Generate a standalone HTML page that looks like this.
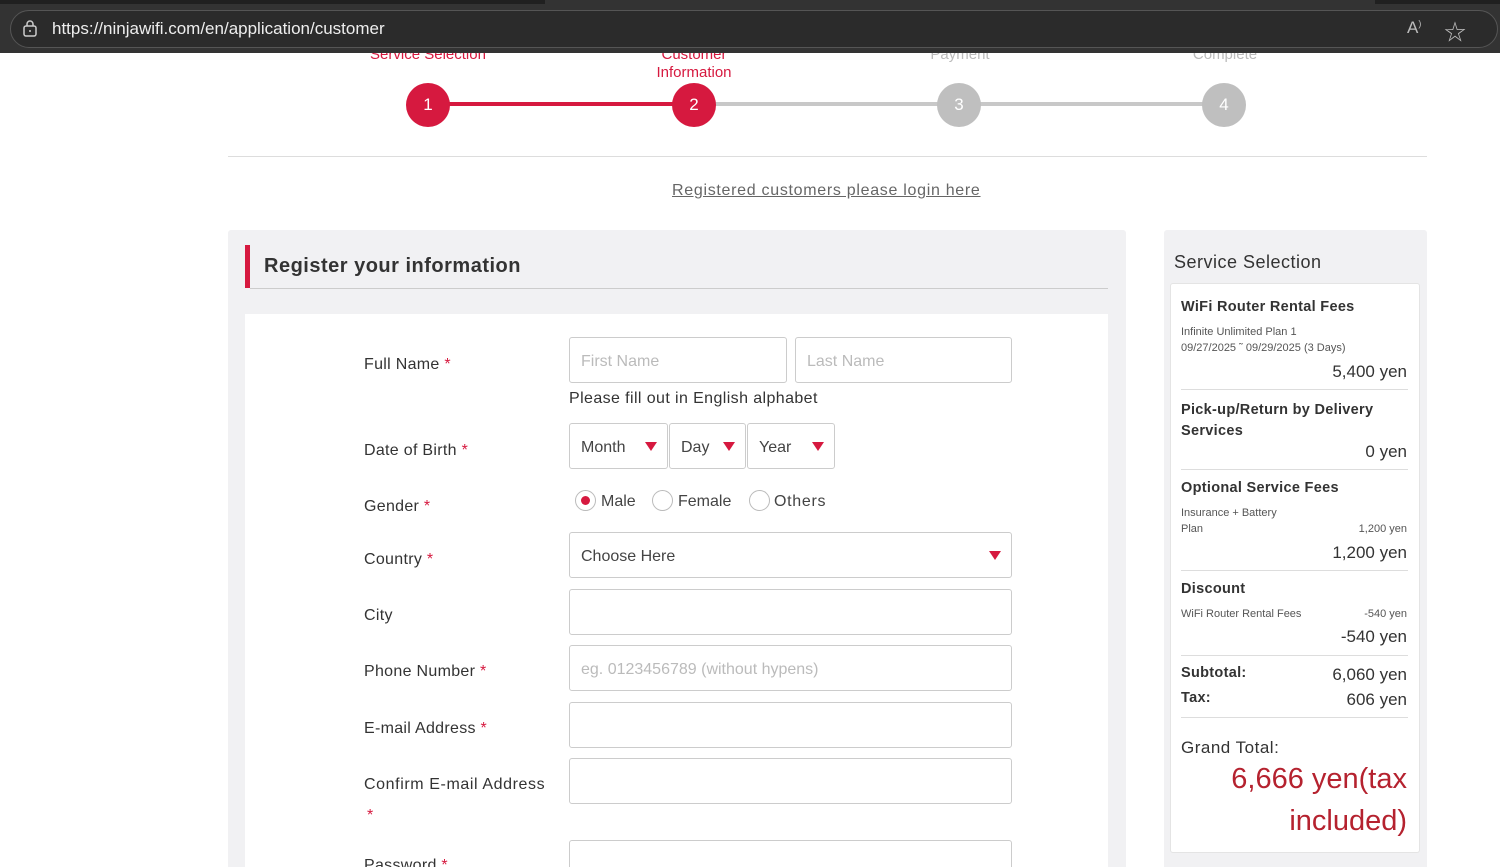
<!DOCTYPE html>
<html style="overflow:hidden;height:867px"><head><meta charset="utf-8"><style>
*{box-sizing:border-box;margin:0;padding:0}
body{width:1500px;height:867px;overflow:hidden;background:#fff;font-family:"Liberation Sans","Noto Sans CJK JP",sans-serif;color:#333;position:relative}
.a{position:absolute}
.lbl{position:absolute;left:364px;font-size:16px;color:#333;letter-spacing:.3px}
.lbl i{color:#d6193f;font-style:normal}
.inp{position:absolute;left:569px;width:443px;height:46px;border:1px solid #ccc;border-radius:3px;background:#fff;font-size:16px;color:#bbb;padding:15px 11px 0}
.sel{position:absolute;top:423px;height:46px;border:1px solid #ccc;border-radius:3px;background:#fff;font-size:16px;color:#444;padding:15px 11px 0}
.tri{position:absolute;width:0;height:0;border-left:6px solid transparent;border-right:6px solid transparent;border-top:9px solid #d6193f}
.circ{position:absolute;top:83px;width:44px;height:44px;border-radius:50%;color:#fff;font-size:17px;text-align:center;line-height:44px}
.step{position:absolute;font-size:15px;color:#d6193f;text-align:center;width:200px;line-height:18px}
.rad{position:absolute;top:490px;width:21px;height:21px;border:1px solid #bbb;border-radius:50%}
.rt{position:absolute;font-size:16px;color:#444}
.h{position:absolute;left:1181px;font-weight:bold;font-size:14.5px;color:#333;letter-spacing:.3px}
.s{position:absolute;font-size:11px;color:#555}
.p{position:absolute;right:93px;font-size:17px;color:#333}
.hr{position:absolute;left:1181px;width:227px;height:1px;background:#ddd}
</style></head><body>
<div class="a" style="left:0;top:0;width:1500px;height:53px;background:#333"></div>
<div class="a" style="left:0;top:0;width:1500px;height:4px;background:#202020"></div>
<div class="a" style="left:545px;top:0;width:830px;height:4px;background:#333"></div>
<div class="a" style="left:10px;top:10px;width:1488px;height:38px;border:1px solid #555;border-radius:19px;background:#2b2b2b"></div>
<svg class="a" style="left:22px;top:19px" width="16" height="18" viewBox="0 0 16 18"><rect x="2" y="7" width="12" height="10" rx="2" fill="none" stroke="#ccc" stroke-width="1.5"/><path d="M5 7V5a3 3 0 0 1 6 0v2" fill="none" stroke="#ccc" stroke-width="1.5"/><circle cx="8" cy="12" r="1" fill="#ccc"/></svg>
<div class="a" style="left:52px;top:19px;font-size:17px;color:#eee">https://ninjawifi.com/en/application/customer</div>
<div class="a" style="left:1407px;top:18px;font-size:17px;color:#bbb">A<sup style="font-size:9px">)</sup></div>
<div class="a" style="left:1444px;top:15px;font-size:22px;color:#bbb">☆</div>

<div class="step" style="left:328px;top:46px;clip-path:inset(7px 0 0 0)">Service Selection</div>
<div class="step" style="left:594px;top:46px;clip-path:inset(7px 0 0 0)">Customer<br>Information</div>
<div class="step" style="left:860px;top:46px;color:#bbb;clip-path:inset(7px 0 0 0)">Payment</div>
<div class="step" style="left:1125px;top:46px;color:#bbb;clip-path:inset(7px 0 0 0)">Complete</div>
<div class="a" style="left:428px;top:102px;width:266px;height:4px;background:#d6193f"></div>
<div class="a" style="left:694px;top:102px;width:530px;height:4px;background:#c8c8c8"></div>
<div class="circ" style="left:406px;background:#d6193f">1</div>
<div class="circ" style="left:672px;background:#d6193f">2</div>
<div class="circ" style="left:937px;background:#bfbfbf">3</div>
<div class="circ" style="left:1202px;background:#bfbfbf">4</div>
<div class="a" style="left:228px;top:156px;width:1199px;height:1px;background:#ddd"></div>
<div class="a" style="left:672px;top:182px;font-size:16px;color:#666;text-decoration:underline;letter-spacing:.7px">Registered customers please login here</div>

<div class="a" style="left:228px;top:230px;width:898px;height:640px;background:#f1f1f3;border-radius:3px"></div>
<div class="a" style="left:245px;top:245px;width:5px;height:43px;background:#d6193f"></div>
<div class="a" style="left:250px;top:288px;width:858px;height:1px;background:#ccc"></div>
<div class="a" style="left:264px;top:255px;font-size:20px;font-weight:bold;color:#333;letter-spacing:.5px">Register your information</div>
<div class="a" style="left:245px;top:314px;width:863px;height:560px;background:#fff"></div>

<div class="lbl" style="top:356px">Full Name <i>*</i></div>
<div class="inp" style="top:337px;width:218px">First Name</div>
<div class="inp" style="top:337px;left:795px;width:217px">Last Name</div>
<div class="a" style="left:569px;top:390px;font-size:16px;color:#333;letter-spacing:.4px">Please fill out in English alphabet</div>

<div class="lbl" style="top:442px">Date of Birth <i>*</i></div>
<div class="sel" style="left:569px;width:99px">Month</div><div class="tri" style="left:645px;top:442px"></div>
<div class="sel" style="left:669px;width:77px">Day</div><div class="tri" style="left:723px;top:442px"></div>
<div class="sel" style="left:747px;width:88px">Year</div><div class="tri" style="left:812px;top:442px"></div>

<div class="lbl" style="top:498px">Gender <i>*</i></div>
<div class="rad" style="left:575px"><div class="a" style="left:5px;top:5px;width:9px;height:9px;border-radius:50%;background:#d6193f"></div></div>
<div class="rt" style="left:601px;top:493px">Male</div>
<div class="rad" style="left:652px"></div><div class="rt" style="left:678px;top:493px">Female</div>
<div class="rad" style="left:749px"></div><div class="rt" style="left:774px;top:493px;letter-spacing:.7px">Others</div>

<div class="lbl" style="top:551px">Country <i>*</i></div>
<div class="inp" style="top:532px;color:#444">Choose Here</div><div class="tri" style="left:989px;top:551px"></div>
<div class="lbl" style="top:607px">City</div>
<div class="inp" style="top:589px"></div>
<div class="lbl" style="top:663px">Phone Number <i>*</i></div>
<div class="inp" style="top:645px">eg. 0123456789 (without hypens)</div>
<div class="lbl" style="top:720px">E-mail Address <i>*</i></div>
<div class="inp" style="top:702px"></div>
<div class="lbl" style="top:776px;letter-spacing:.6px">Confirm E-mail Address</div>
<div class="lbl" style="top:807px;left:367px"><i>*</i></div>
<div class="inp" style="top:758px"></div>
<div class="lbl" style="top:857px">Password <i>*</i></div>
<div class="inp" style="top:840px"></div>

<div class="a" style="left:1164px;top:230px;width:263px;height:640px;background:#f1f1f3;border-radius:3px"></div>
<div class="a" style="left:1174px;top:252px;font-size:18px;color:#333;letter-spacing:.5px">Service Selection</div>
<div class="a" style="left:1170px;top:283px;width:250px;height:570px;background:#fff;border:1px solid #e4e4e4;border-radius:3px"></div>
<div class="h" style="top:299px">WiFi Router Rental Fees</div>
<div class="s" style="left:1181px;top:326px">Infinite Unlimited Plan 1</div>
<div class="s" style="left:1181px;top:342px">09/27/2025 ˜ 09/29/2025 (3 Days)</div>
<div class="p" style="top:362px">5,400 yen</div>
<div class="hr" style="top:389px"></div>
<div class="h" style="top:400px;line-height:21px">Pick-up/Return by Delivery<br>Services</div>
<div class="p" style="top:442px">0 yen</div>
<div class="hr" style="top:469px"></div>
<div class="h" style="top:480px">Optional Service Fees</div>
<div class="s" style="left:1181px;top:507px">Insurance + Battery</div>
<div class="s" style="left:1181px;top:523px">Plan</div>
<div class="s" style="right:93px;top:523px">1,200 yen</div>
<div class="p" style="top:543px">1,200 yen</div>
<div class="hr" style="top:570px"></div>
<div class="h" style="top:581px">Discount</div>
<div class="s" style="left:1181px;top:608px">WiFi Router Rental Fees</div>
<div class="s" style="right:93px;top:608px">-540 yen</div>
<div class="p" style="top:627px">-540 yen</div>
<div class="hr" style="top:655px"></div>
<div class="h" style="top:665px">Subtotal:</div><div class="p" style="top:665px">6,060 yen</div>
<div class="h" style="top:690px">Tax:</div><div class="p" style="top:690px">606 yen</div>
<div class="hr" style="top:717px"></div>
<div class="a" style="left:1181px;top:738px;font-size:17px;color:#333;letter-spacing:.5px">Grand Total:</div>
<div class="a" style="right:93px;top:758px;font-size:29px;color:#b5222f;text-align:right;line-height:42px">6,666 yen(tax<br>included)</div>
</body></html>
